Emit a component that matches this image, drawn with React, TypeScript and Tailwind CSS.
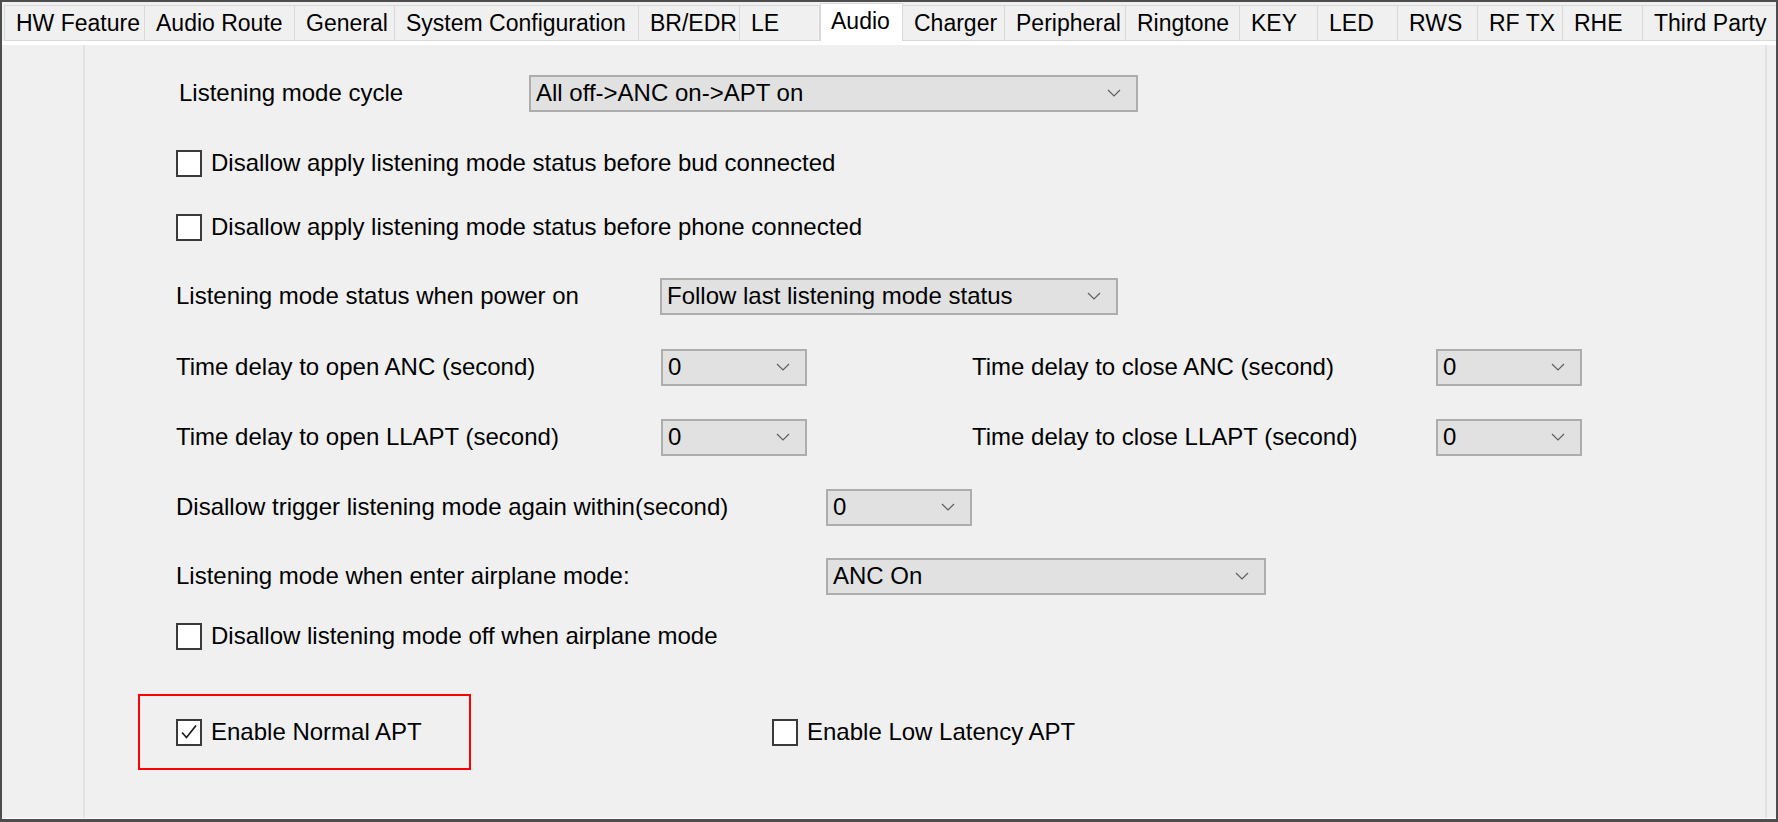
import clsx from "clsx";

type Tab = { label: string; width: string; active?: boolean };

const tabs: Tab[] = [
  { label: "HW Feature", width: "w-[141px]" },
  { label: "Audio Route", width: "w-[150px]" },
  { label: "General", width: "w-[100px]" },
  { label: "System Configuration", width: "w-[244px]" },
  { label: "BR/EDR", width: "w-[101px]" },
  { label: "LE", width: "w-[80px]" },
  { label: "Audio", width: "w-[83px]", active: true },
  { label: "Charger", width: "w-[102px]" },
  { label: "Peripheral", width: "w-[121px]" },
  { label: "Ringtone", width: "w-[114px]" },
  { label: "KEY", width: "w-[78px]" },
  { label: "LED", width: "w-[80px]" },
  { label: "RWS", width: "w-[80px]" },
  { label: "RF TX", width: "w-[85px]" },
  { label: "RHE", width: "w-[80px]" },
  { label: "Third Party", width: "w-[140px]" },
];

function Combo({ value, width }: { value: string; width: string }) {
  return (
    <div
      className={clsx(
        "flex h-[37px] shrink-0 items-center justify-between border-2 border-[#adadad] bg-[#e1e1e1] pl-[5px] pr-[15px]",
        width,
      )}
    >
      <span>{value}</span>
      <svg width="14" height="8" viewBox="0 0 14 8" aria-hidden="true">
        <path d="M1 1l6 6 6-6" fill="none" stroke="#5f5f5f" strokeWidth="1.2" />
      </svg>
    </div>
  );
}

function Check({ label, checked = false }: { label: string; checked?: boolean }) {
  return (
    <div className="flex items-center gap-[9px]">
      <div className="flex h-[27px] w-[26px] shrink-0 items-center justify-center border-2 border-[#3a3a3a] bg-white">
        {checked && (
          <svg width="20" height="20" viewBox="0 0 20 20" aria-hidden="true">
            <path d="M3 10.5l4.5 5L17 3.5" fill="none" stroke="#1a1a1a" strokeWidth="1.7" />
          </svg>
        )}
      </div>
      <span>{label}</span>
    </div>
  );
}

export default function App() {
  return (
    <div className="flex h-[822px] w-[1778px] flex-col overflow-hidden border-2 border-b-[3px] border-[#4d4d4d] bg-[#f0f0f0] font-['Liberation_Sans',Arial,sans-serif] text-black">
      {/* tab strip */}
      <div className="flex h-[39px] shrink-0 items-end overflow-hidden pl-[2px] text-[23px]">
        {tabs.map((t, i) =>
          t.active ? (
            <div
              key={t.label}
              className={clsx(
                "flex h-[38px] shrink-0 items-center border-x border-t border-[#d9d9d9] bg-white pb-[3px] pl-[10px]",
                t.width,
              )}
            >
              {t.label}
            </div>
          ) : (
            <div
              key={t.label}
              className={clsx(
                "flex h-[36px] shrink-0 items-center border-y border-r border-[#d9d9d9] bg-[#f0f0f0] pl-[11px]",
                i === 0 && "border-l",
                t.width,
              )}
            >
              {t.label}
            </div>
          ),
        )}
      </div>

      {/* pane */}
      <div className="flex min-h-0 flex-1 border-y-4 border-b border-white">
        <div className="w-[83px] shrink-0 border-r-2 border-[#e2e2e2]" />

        <div className="flex flex-1 flex-col pl-[91px] text-[24px]">
          <div className="mt-[28px] flex h-[40px] items-center">
            <span className="w-[353px] shrink-0 pl-[3px]">Listening mode cycle</span>
            <Combo value="All off->ANC on->APT on" width="w-[609px]" />
          </div>

          <div className="mt-[30px] flex h-[40px] items-center">
            <Check label="Disallow apply listening mode status before bud connected" />
          </div>

          <div className="mt-[24px] flex h-[40px] items-center">
            <Check label="Disallow apply listening mode status before phone connected" />
          </div>

          <div className="mt-[29px] flex h-[40px] items-center">
            <span className="w-[484px] shrink-0">Listening mode status when power on</span>
            <Combo value="Follow last listening mode status" width="w-[458px]" />
          </div>

          <div className="mt-[31px] flex h-[40px] items-center">
            <span className="w-[485px] shrink-0">Time delay to open ANC (second)</span>
            <Combo value="0" width="w-[146px]" />
            <span className="ml-[165px] w-[464px] shrink-0">Time delay to close ANC (second)</span>
            <Combo value="0" width="w-[146px]" />
          </div>

          <div className="mt-[30px] flex h-[40px] items-center">
            <span className="w-[485px] shrink-0">Time delay to open LLAPT (second)</span>
            <Combo value="0" width="w-[146px]" />
            <span className="ml-[165px] w-[464px] shrink-0">Time delay to close LLAPT (second)</span>
            <Combo value="0" width="w-[146px]" />
          </div>

          <div className="mt-[30px] flex h-[40px] items-center">
            <span className="w-[650px] shrink-0">Disallow trigger listening mode again within(second)</span>
            <Combo value="0" width="w-[146px]" />
          </div>

          <div className="mt-[29px] flex h-[40px] items-center">
            <span className="w-[650px] shrink-0">Listening mode when enter airplane mode:</span>
            <Combo value="ANC On" width="w-[440px]" />
          </div>

          <div className="mt-[20px] flex h-[40px] items-center">
            <Check label="Disallow listening mode off when airplane mode" />
          </div>

          <div className="mt-[38px] ml-[-38px] flex h-[76px] items-center">
            <div className="flex h-[76px] w-[333px] shrink-0 items-center border-2 border-[#ff0000] pl-[36px]">
              <Check label="Enable Normal APT" checked />
            </div>
            <div className="ml-[301px]">
              <Check label="Enable Low Latency APT" />
            </div>
          </div>
        </div>

        <div className="w-[11px] shrink-0 border-l-2 border-[#e2e2e2]" />
      </div>
    </div>
  );
}
